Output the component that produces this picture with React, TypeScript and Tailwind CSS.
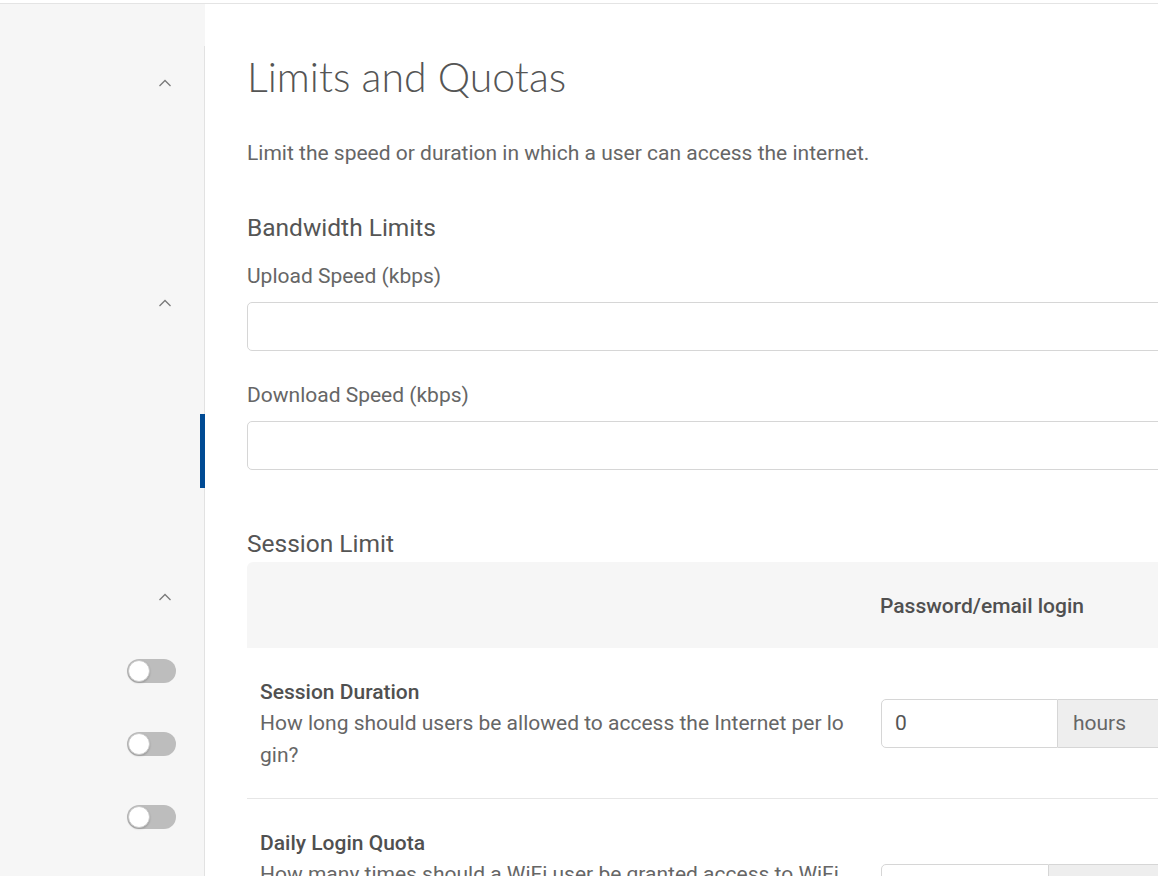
import React from "react";

const Chevron = () => (
  <svg width="14" height="8" viewBox="0 0 14 8" fill="none">
    <path d="M1.5 7L7 1.5L12.5 7" stroke="#7a7a7a" strokeWidth="1.3" />
  </svg>
);

const Toggle = () => (
  <div className="relative h-[24px] w-[49px] rounded-full bg-[#bdbdbd]">
    <div className="absolute left-[1px] top-[1px] h-[22px] w-[22px] rounded-full border border-[#c9c9c9] bg-white shadow-[0_1px_2px_rgba(0,0,0,0.2)]" />
  </div>
);

export default function App() {
  const body = { fontFamily: "Roboto, 'Liberation Sans', sans-serif" };
  return (
    <div className="h-[876px] w-[1158px] overflow-hidden bg-white" style={body}>
      <div className="h-[4px] border-b border-[#e4e4e4]" />
      <div className="flex h-[872px]">
        {/* Sidebar */}
        <div className="w-[205px] shrink-0 bg-[#f6f6f6] pt-[42px]">
          <div className="relative h-full border-r border-[#e2e2e2]">
            <div className="flex h-[74px] items-center justify-end pr-[32px]">
              <Chevron />
            </div>
            <div className="h-[146px]" />
            <div className="flex h-[74px] items-center justify-end pr-[32px]">
              <Chevron />
            </div>
            <div className="flex h-[74px] items-center justify-end" />
            <div className="flex h-[74px] justify-end">
              <div className="mr-[-1px] w-[5px] bg-[#004a93]" />
            </div>
            <div className="h-[72px]" />
            <div className="flex h-[74px] items-center justify-end pr-[32px]">
              <Chevron />
            </div>
            <div className="flex flex-col items-end gap-[49px] pr-[28px] pt-[25px]">
              <Toggle />
              <Toggle />
              <Toggle />
            </div>
          </div>
        </div>

        {/* Main */}
        <div className="min-w-0 flex-1 overflow-hidden pl-[42px]">
          <div className="w-[1000px]">
            <h1
              className="mt-[48px] text-[41px] font-light leading-[50px] text-[#555555]"
              style={{ fontFamily: "Lato, 'Liberation Sans', sans-serif" }}
            >
              Limits and Quotas
            </h1>
            <p className="mt-[36px] text-[21px] leading-[30px] text-[#666666]">
              Limit the speed or duration in which a user can access the internet.
            </p>
            <h2 className="mt-[44px] text-[24.5px] leading-[32px] text-[#555555]">Bandwidth Limits</h2>
            <div className="mt-[17px] text-[21px] leading-[30px] text-[#666666]">Upload Speed (kbps)</div>
            <div className="mt-[11px] h-[49px] rounded-[5px] border border-[#d6d6d6] bg-white" />
            <div className="mt-[29px] text-[21px] leading-[30px] text-[#666666]">Download Speed (kbps)</div>
            <div className="mt-[11px] h-[49px] rounded-[5px] border border-[#d6d6d6] bg-white" />
            <h2 className="mt-[58px] text-[24.5px] leading-[32px] text-[#555555]">Session Limit</h2>

            <div className="mt-[2px]">
              <div className="flex h-[86px] items-center rounded-t-[6px] bg-[#f6f6f6] pt-[3px]">
                <div className="w-[621px]" />
                <div className="pl-[12px] text-[21px] font-medium text-[#505050]">Password/email login</div>
              </div>
              <div className="flex border-b border-[#e6e6e6] pb-[27px] pt-[30px]">
                <div className="w-[621px] px-[13px]">
                  <div className="text-[21px] font-medium leading-[29px] text-[#505050]">Session Duration</div>
                  <div className="text-[21px] leading-[32px] text-[#666666]">
                    How long should users be allowed to access the Internet per lo
                    <br />
                    gin?
                  </div>
                </div>
                <div className="pl-[13px] pt-[21px]">
                  <div className="flex h-[49px]">
                    <div className="flex w-[177px] items-center rounded-l-[5px] border border-[#d6d6d6] px-[13px] text-[21px] text-[#555555]">
                      0
                    </div>
                    <div className="flex w-[110px] items-center border border-l-0 border-[#d6d6d6] bg-[#eeeeee] px-[15px] text-[21px] text-[#666666]">
                      hours
                    </div>
                  </div>
                </div>
              </div>
              <div className="flex pt-[30px]">
                <div className="w-[621px] px-[13px]">
                  <div className="text-[21px] font-medium leading-[29px] text-[#505050]">Daily Login Quota</div>
                  <div className="whitespace-nowrap text-[21px] leading-[32px] text-[#666666]">
                    How many times should a WiFi user be granted access to WiFi
                  </div>
                </div>
                <div className="pl-[13px] pt-[35px]">
                  <div className="flex h-[49px]">
                    <div className="w-[168px] rounded-l-[5px] border border-[#d6d6d6]" />
                    <div className="w-[110px] border border-l-0 border-[#d6d6d6] bg-[#eeeeee]" />
                  </div>
                </div>
              </div>
            </div>
          </div>
        </div>
      </div>
    </div>
  );
}
